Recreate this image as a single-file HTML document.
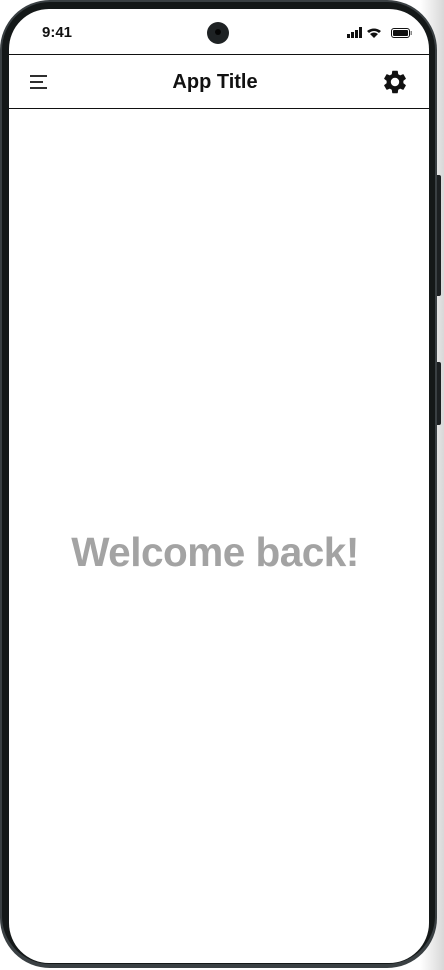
<!DOCTYPE html>
<html><head><style>
html,body{margin:0;padding:0;width:444px;height:970px;overflow:hidden;background:linear-gradient(90deg,#fff 0,#fff 420px,#d8d8d8 444px);font-family:"Liberation Sans",sans-serif}
.phone{position:absolute;left:0;top:0;width:437px;height:968px;border-radius:50px;background:#3a4043;box-sizing:border-box}
.inner{position:absolute;left:2px;top:2px;right:2px;bottom:4px;border-radius:48px;background:#141818}
.screen{position:absolute;left:9px;top:9px;width:420px;height:954px;border-radius:40px;background:#fff;overflow:hidden}
.btn{position:absolute;left:436px;width:5px;background:#1c2022;border-radius:0 2px 2px 0}
.time{position:absolute;left:42px;top:24px;font-size:15px;font-weight:bold;color:#111}
.cam{position:absolute;left:207px;top:22px;width:22px;height:22px;border-radius:50%;background:#1e2224}
.cam:after{content:"";position:absolute;left:8px;top:7px;width:6px;height:6px;border-radius:50%;background:#050505}
.line{position:absolute;left:9px;width:420px;height:1px;background:#111}
.title{position:absolute;left:0;width:430px;top:71px;text-align:center;font-size:20px;font-weight:bold;color:#111}
.welcome{position:absolute;left:0;width:430px;top:529px;text-align:center;font-size:40.5px;font-weight:bold;color:#a3a3a3;letter-spacing:-0.5px}
</style></head><body>
<div class="btn" style="top:175px;height:121px"></div>
<div class="btn" style="top:362px;height:63px"></div>
<div class="phone"><div class="inner"></div></div>
<div class="screen"></div>
<div class="time">9:41</div>
<div class="cam"></div>
<svg style="position:absolute;left:347px;top:27px" width="66" height="12">
<rect x="0" y="7" width="3" height="4" fill="#111"/><rect x="4" y="5" width="3" height="6" fill="#111"/><rect x="8" y="3" width="3" height="8" fill="#111"/><rect x="12" y="0" width="3" height="11" fill="#111"/>
<path d="M20 4 Q27 -1 34 4 L32 6 Q27 2 22 6Z M23 7 Q27 4 31 7 L27 11Z" fill="#111"/>
<rect x="44.5" y="1.5" width="18" height="9" rx="2.5" fill="none" stroke="#111"/><rect x="46" y="3" width="15" height="6" rx="1" fill="#111"/><rect x="63.5" y="4" width="1.5" height="4" fill="#888"/>
</svg>
<div class="line" style="top:54px"></div>
<div class="line" style="top:108px"></div>
<svg style="position:absolute;left:29px;top:74px" width="20" height="16"><path d="M1 2H18M1 8H14M1 14H18" stroke="#111" stroke-width="1.8"/></svg>
<div class="title">App Title</div>
<svg style="position:absolute;left:381px;top:68px" width="28" height="28" viewBox="0 0 24 24"><path fill="#111" d="M19.140 12.94c.04-.3.06-.61.06-.94s-.02-.64-.07-.94l2.03-1.58a.49.49 0 0 0 .12-.61l-1.92-3.32a.49.49 0 0 0-.59-.22l-2.39.96c-.5-.38-1.03-.7-1.62-.94l-.36-2.540a.48.48 0 0 0-.48-.41h-3.84c-.24 0-.43.17-.47.41l-.36 2.54c-.59.24-1.130.57-1.62.94l-2.39-.96a.48.48 0 0 0-.59.22L2.74 8.87c-.12.21-.08.47.12.61l2.03 1.58c-.05.3-.09.63-.09.94s.02.64.07.94l-2.03 1.58a.49.49 0 0 0-.12.61l1.92 3.32c.12.22.37.29.59.22l2.39-.96c.5.38 1.03.7 1.62.94l.36 2.54c.05.24.24.41.48.41h3.84c.24 0 .44-.17.47-.41l.36-2.54c.59-.24 1.13-.56 1.62-.94l2.39.96c.22.08.47 0 .59-.22l1.92-3.32c.12-.22.07-.47-.12-.61l-2.01-1.58zM12 15.6A3.6 3.6 0 1 1 12 8.4a3.6 3.6 0 0 1 0 7.2z"/></svg>
<div class="welcome">Welcome back!</div>
</body></html>
